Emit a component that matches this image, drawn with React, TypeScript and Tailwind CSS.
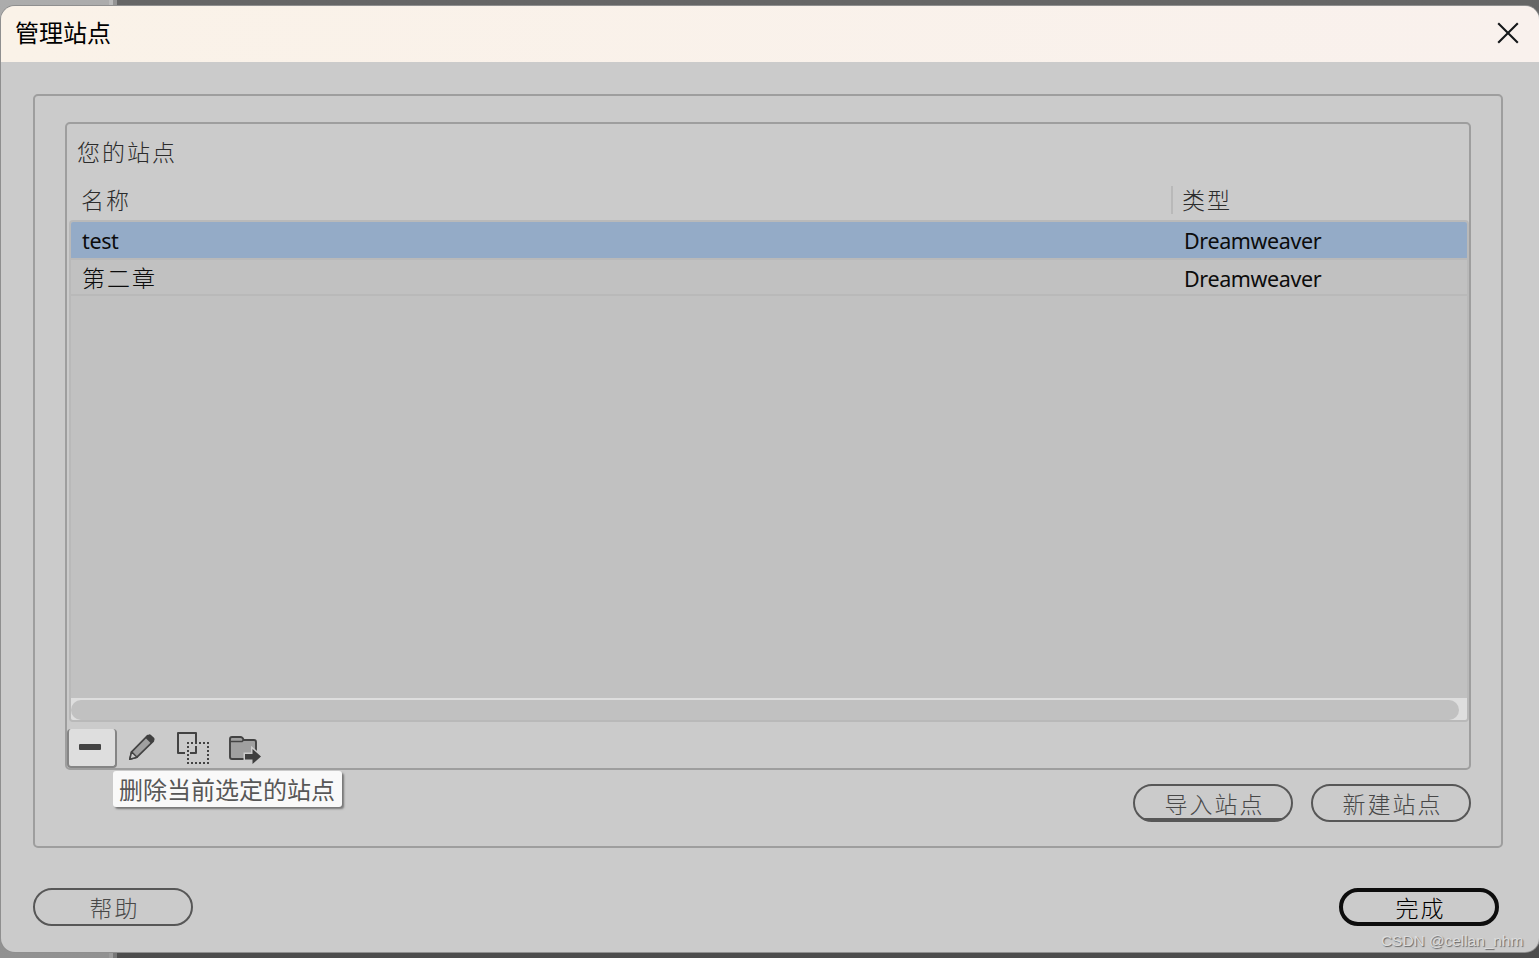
import React, { useState } from 'react';
import clsx from 'clsx';

interface Site {
  name: string;
  type: string;
  cjk?: boolean;
}

const SITES: Site[] = [
  { name: 'test', type: 'Dreamweaver' },
  { name: '第二章', type: 'Dreamweaver', cjk: true },
];

function CloseIcon() {
  return (
    <svg width="22" height="22" viewBox="0 0 22 22" fill="none" stroke="#15181a" strokeWidth="2.1">
      <path d="M1.2 1.2 20.8 20.8M20.8 1.2 1.2 20.8" />
    </svg>
  );
}

function PencilIcon() {
  return (
    <svg width="28" height="28" viewBox="0 0 28 28" fill="none" strokeLinejoin="round">
      <path d="M1.8 26.2 3.6 18.8 19.6 2.6 25.3 8.2 9 24.2Z" fill="#a0a0a0" stroke="#434343" strokeWidth="1.7" />
      <path d="M1.8 26.2 3.6 18.8 9 24.2Z" fill="#cbcbcb" stroke="#434343" strokeWidth="1.5" />
      <path d="M17.4 4.8 20.4 1.8Q21.6.8 23 2L26 4.8Q27.2 6.2 26.2 7.4L23 10.6Z" fill="#404040" />
    </svg>
  );
}

function DuplicateIcon() {
  return (
    <svg width="34" height="34" viewBox="0 0 34 34" fill="none" stroke="#434343" strokeWidth="2">
      <path d="M9 22H2V2H20V12M20 15V22H14" strokeLinejoin="round" />
      <path d="M11 12H33M11 32H33" strokeDasharray="2 2" />
      <path d="M12 15V33M32 15V33" strokeDasharray="2 2" />
    </svg>
  );
}

function ExportIcon() {
  return (
    <svg width="34" height="30" viewBox="0 0 34 30" fill="none">
      <path
        d="M2 22V4Q2 2 4 2H12.5Q14.6 2 15.6 5H26Q28 5 28 7V24H4Q2 24 2 22Z"
        fill="#a0a0a0"
        stroke="#434343"
        strokeWidth="1.9"
      />
      <path d="M2 6.5H14L15.6 5" stroke="#434343" strokeWidth="1.7" />
      <path d="M17 19H24.5V14L33 21.5 24.5 29V24.5H17Z" fill="#3f3f3f" stroke="#cbcbcb" strokeWidth="3" paintOrder="stroke" />
    </svg>
  );
}

interface PillButtonProps {
  children: React.ReactNode;
  variant?: 'normal' | 'heavy' | 'primary';
}

function PillButton({ children, variant = 'normal' }: PillButtonProps) {
  return (
    <button
      className={clsx(
        'flex h-[38px] w-40 items-center justify-center rounded-full pt-[3px] pl-[3px] text-[23px] leading-none font-light tracking-[2px]',
        variant === 'normal' && 'border-2 border-[#575757] text-[#484848]',
        variant === 'heavy' && 'border-2 border-[#575757] bg-[linear-gradient(to_top,#575757_2px,transparent_2px)] text-[#484848]',
        variant === 'primary' && 'border-4 border-[#0d0d0d] text-black'
      )}
    >
      {children}
    </button>
  );
}

export default function App() {
  const [selected, setSelected] = useState(0);

  return (
    <div className="relative h-[958px] w-[1539px] overflow-hidden pt-[6px] pl-px font-['Noto_Sans','Noto_Sans_CJK_SC',sans-serif]">
      {/* application window behind the dialog */}
      <div className="absolute inset-0 flex">
        <div className="w-[109px] bg-linear-to-b from-[#acacac] to-[#919191]" />
        <div className="w-1 bg-linear-to-b from-[#bababa] to-[#9b9b9b]" />
        <div className="w-1 bg-linear-to-b from-[#949494] to-[#777777]" />
        <div className="flex-1 bg-linear-to-b from-[#666666] to-[#4d4d4d]" />
      </div>

      <div className="relative flex h-[946px] w-[1538px] flex-col overflow-hidden rounded-[14px] bg-[#cbcbcb] shadow-[0_0_0_1px_#8f8f8f]">
        <header className="flex h-14 shrink-0 items-center justify-between bg-linear-to-r from-[#faf2e8] to-[#f9f1ed] pr-5 pl-[14px]">
          <h1 className="pb-[3px] text-2xl leading-none text-black">管理站点</h1>
          <button className="pb-[3px]">
            <CloseIcon />
          </button>
        </header>

        <main className="mt-8 ml-8 flex h-[754px] w-[1470px] shrink-0 flex-col rounded-[5px] border-2 border-[#9e9e9e] px-[30px] pt-[26px]">
          <section className="flex h-[648px] flex-col rounded-[5px] border-2 border-[#9e9e9e]">
            <h2 className="h-[54px] pt-[17px] pl-[10px] text-[23px] leading-none font-light tracking-[2px] text-[#2c2c2c]">您的站点</h2>
            <div className="flex h-[42px] pl-[14px] text-[23px] leading-none font-light tracking-[2px] text-[#2c2c2c]">
              <div className="w-[1090px] pt-[11px]">名称</div>
              <div className="mt-2 h-7 border-l-2 border-[#b9b9b9] pt-[3px] pl-[9px]">类型</div>
            </div>

            <div className="ml-[2px] flex h-[502px] shrink-0 flex-col overflow-hidden rounded-[4px] border-2 border-[#b9b9b9] bg-[#c1c1c1]">
              {SITES.map((site, i) => (
                <div
                  key={site.name}
                  onClick={() => setSelected(i)}
                  className={clsx(
                    'flex items-center border-b-2 border-[#b9b9b9] pt-[2px] pl-[11px] text-[21.5px] leading-none tracking-[-0.37px] text-[#0c0c0c]',
                    i === 0 ? 'h-[38px]' : 'h-9',
                    selected === i && 'bg-[#94abc7]'
                  )}
                >
                  <span className={clsx('w-[1102px]', site.cjk && 'text-[23px] font-light tracking-[2px]')}>{site.name}</span>
                  <span className={clsx(i > 0 && 'pt-[2px]')}>{site.type}</span>
                </div>
              ))}
              <div className="mt-auto h-[22px] bg-[#dedede] pt-[2px] pr-2">
                <div className="h-5 rounded-full bg-[#c1c1c1]" />
              </div>
            </div>

            <div className="mt-[7px] flex h-[39px]">
              <button className="flex h-[39px] w-[50px] items-center justify-center rounded-[4px] border-2 border-t-0 border-[#858585] bg-[#dedede] pr-1 pb-px">
                <span className="h-[6px] w-[22px] rounded-[1px] bg-[#434343]" />
              </button>
              <button className="mt-[4px] ml-[11px] self-start">
                <PencilIcon />
              </button>
              <button className="mt-[2px] ml-5 self-start">
                <DuplicateIcon />
              </button>
              <button className="mt-[6px] ml-[18px] self-start">
                <ExportIcon />
              </button>
            </div>
          </section>

          <div className="mt-[14px] flex justify-end gap-[18px]">
            <PillButton variant="heavy">导入站点</PillButton>
            <PillButton>新建站点</PillButton>
          </div>
        </main>

        <footer className="mt-10 mr-10 ml-8 flex justify-between">
          <PillButton>帮助</PillButton>
          <PillButton variant="primary">完成</PillButton>
        </footer>
      </div>

      <div className="absolute top-[771px] left-[113px] flex h-9 w-[229px] items-center rounded-[3px] bg-[#f9f9f9] pt-[2px] pl-[6px] text-2xl leading-none whitespace-nowrap text-[#575757] shadow-[2px_2px_2px_#777]">
        删除当前选定的站点
      </div>
      <div className="absolute top-[931px] left-[1381px] font-['Liberation_Sans',sans-serif] text-[15.4px] leading-[19px] whitespace-nowrap text-[#dcdcdc] [text-shadow:1px_1px_1px_#666]">
        CSDN @cellan_nhm
      </div>
    </div>
  );
}
